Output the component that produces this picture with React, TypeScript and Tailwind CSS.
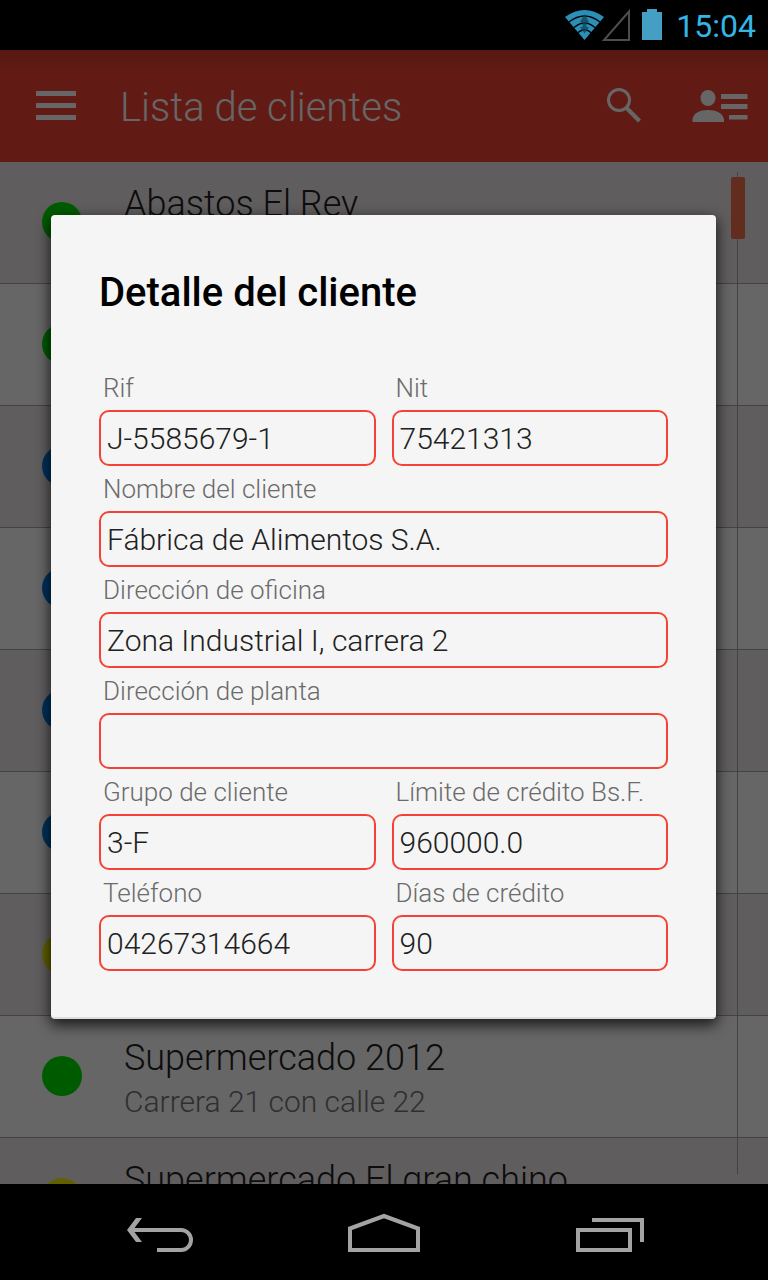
import React from "react";

type Client = { id: number; name?: string; address?: string; dot: string };

const clients: Client[] = [
  { id: 1, name: "Abastos El Rey", dot: "bg-[#00e400]" },
  { id: 2, dot: "bg-[#00e400]" },
  { id: 3, dot: "bg-[#0078e4]" },
  { id: 4, dot: "bg-[#0078e4]" },
  { id: 5, dot: "bg-[#0078e4]" },
  { id: 6, dot: "bg-[#0078e4]" },
  { id: 7, dot: "bg-[#f0f000]" },
  { id: 8, name: "Supermercado 2012", address: "Carrera 21 con calle 22", dot: "bg-[#00e400]" },
  { id: 9, name: "Supermercado El gran chino", dot: "bg-[#f0f000]" },
];

type FieldProps = { id: string; label: string; value: string; wide?: boolean };

const fields: FieldProps[] = [
  { id: "rif", label: "Rif", value: "J-5585679-1" },
  { id: "nit", label: "Nit", value: "75421313" },
  { id: "nombre", label: "Nombre del cliente", value: "Fábrica de Alimentos S.A.", wide: true },
  { id: "oficina", label: "Dirección de oficina", value: "Zona Industrial I, carrera 2", wide: true },
  { id: "planta", label: "Dirección de planta", value: "", wide: true },
  { id: "grupo", label: "Grupo de cliente", value: "3-F" },
  { id: "limite", label: "Límite de crédito Bs.F.", value: "960000.0" },
  { id: "telefono", label: "Teléfono", value: "04267314664" },
  { id: "dias", label: "Días de crédito", value: "90" },
];

function Field({ id, label, value, wide }: FieldProps) {
  return (
    <div className={wide ? "col-span-2 flex flex-col" : "flex min-w-0 flex-col"}>
      <label htmlFor={id} className="h-[45px] pl-1 text-[26px] leading-[47px] font-light whitespace-nowrap text-[#6b6b6b]">
        {label}
      </label>
      <input
        id={id}
        type="text"
        readOnly
        defaultValue={value}
        className="h-14 w-full min-w-0 rounded-[10px] border-2 border-[#f44336] bg-transparent px-[6px] text-[30px] font-light text-[#212121] outline-none"
      />
    </div>
  );
}

function StatusBar() {
  return (
    <header className="flex h-[50px] shrink-0 items-center justify-end bg-black pr-3 text-[#33b5e5]">
      <svg width="104" height="50" viewBox="0 0 104 50" aria-hidden="true">
        <path d="M5 17Q24.500 3 44 17L24.500 40Z" fill="#2b8fb8" />
        <g fill="none" stroke="#000" strokeWidth="1.400">
          <path d="M9 22Q24.500 10 40 22" />
          <path d="M14 27.500Q24.500 18.500 35 27.500" />
          <path d="M18 32.500Q24.500 27 31 32.500" />
        </g>
        <path d="M24.500 14l4.500 8h-2.500v5H29l-4.500 6.500L20 27h2.500v-5H20z" fill="#0e475c" opacity=".8" />
        <path d="M44 40H69V11.500Z" fill="none" stroke="#4d4d4d" strokeWidth="2" />
        <path d="M82 12h5V9h10v3h5v28H82Z" fill="#459ec4" />
      </svg>
      <time className="pl-3 pt-[2px] text-[32px] leading-none">15:04</time>
    </header>
  );
}

function AppBar() {
  return (
    <div className="flex h-28 shrink-0 items-center bg-[#f44336] bg-linear-to-b from-black/10 to-transparent to-20% pr-5 pl-9 text-white">
      <button type="button" aria-label="Menú" className="shrink-0">
        <svg width="40" height="30" viewBox="0 0 40 30" fill="currentColor" aria-hidden="true">
          <rect width="40" height="5" rx=".5" />
          <rect y="12" width="40" height="5" rx=".5" />
          <rect y="24" width="40" height="5" rx=".5" />
        </svg>
      </button>
      <h1 className="ml-11 grow pt-1 text-[40px] leading-none font-light whitespace-nowrap">Lista de clientes</h1>
      <button type="button" aria-label="Buscar" className="shrink-0">
        <svg width="34" height="36" viewBox="0 0 34 36" fill="none" stroke="currentColor" aria-hidden="true">
          <circle cx="12" cy="12" r="10.500" strokeWidth="3" />
          <path d="M19.500 20L32.500 33" strokeWidth="4" />
        </svg>
      </button>
      <button type="button" aria-label="Contactos" className="ml-[51px] shrink-0">
        <svg width="56" height="34" viewBox="0 0 56 34" fill="currentColor" aria-hidden="true">
          <ellipse cx="16" cy="9" rx="7.500" ry="8" />
          <path d="M.500 33V30C1.500 24 8 21 16 21S30.500 24 32 30V33Z" />
          <rect x="29" y="5" width="26.500" height="5" rx=".5" />
          <rect x="29" y="15" width="26.500" height="5" rx=".5" />
          <rect x="37" y="26" width="18.500" height="4.500" rx=".5" />
        </svg>
      </button>
    </div>
  );
}

function ClientList() {
  return (
    <div className="relative min-h-0 grow overflow-hidden bg-white">
      <ul>
        {clients.map((c) => (
          <li
            key={c.id}
            className="flex h-[122px] items-start border-b border-[#a8a8a8] bg-white pl-[42px] odd:bg-[#f0e9eb]"
          >
            <span className={"mt-10 size-10 shrink-0 rounded-full " + c.dot} />
            <div className="ml-[42px] pt-[19px] font-light whitespace-nowrap">
              {c.name && <p className="text-[36px] leading-[46px] text-[#212121]">{c.name}</p>}
              {c.address && <p className="text-[30px] leading-[42px] text-[#757575]">{c.address}</p>}
            </div>
          </li>
        ))}
      </ul>
      <div className="absolute top-[10px] right-[23px] bottom-[10px] w-[14px] pl-[6px]">
        <div className="h-full w-px bg-[#a8a8a8]" />
        <div className="absolute top-[5px] left-0 h-[62px] w-[14px] rounded-[2px] bg-[#f46e4b]" />
      </div>
    </div>
  );
}

function ClientDialog() {
  return (
    <section
      role="dialog"
      aria-labelledby="dialog-title"
      className="w-full rounded-[4px] border-b-2 border-[#dcdedd] bg-[#f5f5f5] px-12 pb-[46px] shadow-[0_5px_14px_1px_rgba(0,0,0,0.75)]"
    >
      <h2 id="dialog-title" className="pt-[55px] pb-[49px] text-[40px] leading-[46px] font-medium text-black">
        Detalle del cliente
      </h2>
      <form className="grid grid-cols-2 gap-x-4">
        {fields.map((f) => (
          <Field key={f.id} {...f} />
        ))}
      </form>
    </section>
  );
}

function NavBar() {
  return (
    <nav className="flex h-24 shrink-0 items-center justify-between bg-black px-[124px] text-[#a3a3a3]">
      <button type="button" aria-label="Atrás">
        <svg width="72" height="48" viewBox="0 0 72 48" aria-hidden="true">
          <path d="M3 22L12 10H18L9 22L18 34H12Z" fill="currentColor" />
          <path d="M6 22H57A10 10 0 0 1 57 42H33" fill="none" stroke="currentColor" strokeWidth="4" />
        </svg>
      </button>
      <button type="button" aria-label="Inicio">
        <svg width="72" height="48" viewBox="0 0 72 48" fill="none" stroke="currentColor" strokeWidth="4" aria-hidden="true">
          <path d="M2 20.500L36 8L70 20.500V42H2Z" />
        </svg>
      </button>
      <button type="button" aria-label="Recientes">
        <svg width="72" height="48" viewBox="0 0 72 48" fill="none" stroke="currentColor" strokeWidth="4" aria-hidden="true">
          <path d="M6 22H58V42H6ZM20 12H70V34" />
        </svg>
      </button>
    </nav>
  );
}

export default function App() {
  return (
    <div className="flex h-screen flex-col overflow-hidden bg-black font-['Roboto',sans-serif]">
      <StatusBar />
      <main className="relative flex min-h-0 grow flex-col">
        <AppBar />
        <ClientList />
        <div className="absolute inset-0 flex items-center justify-center bg-black/60 pr-[52px] pl-[51px]">
          <ClientDialog />
        </div>
      </main>
      <NavBar />
    </div>
  );
}
